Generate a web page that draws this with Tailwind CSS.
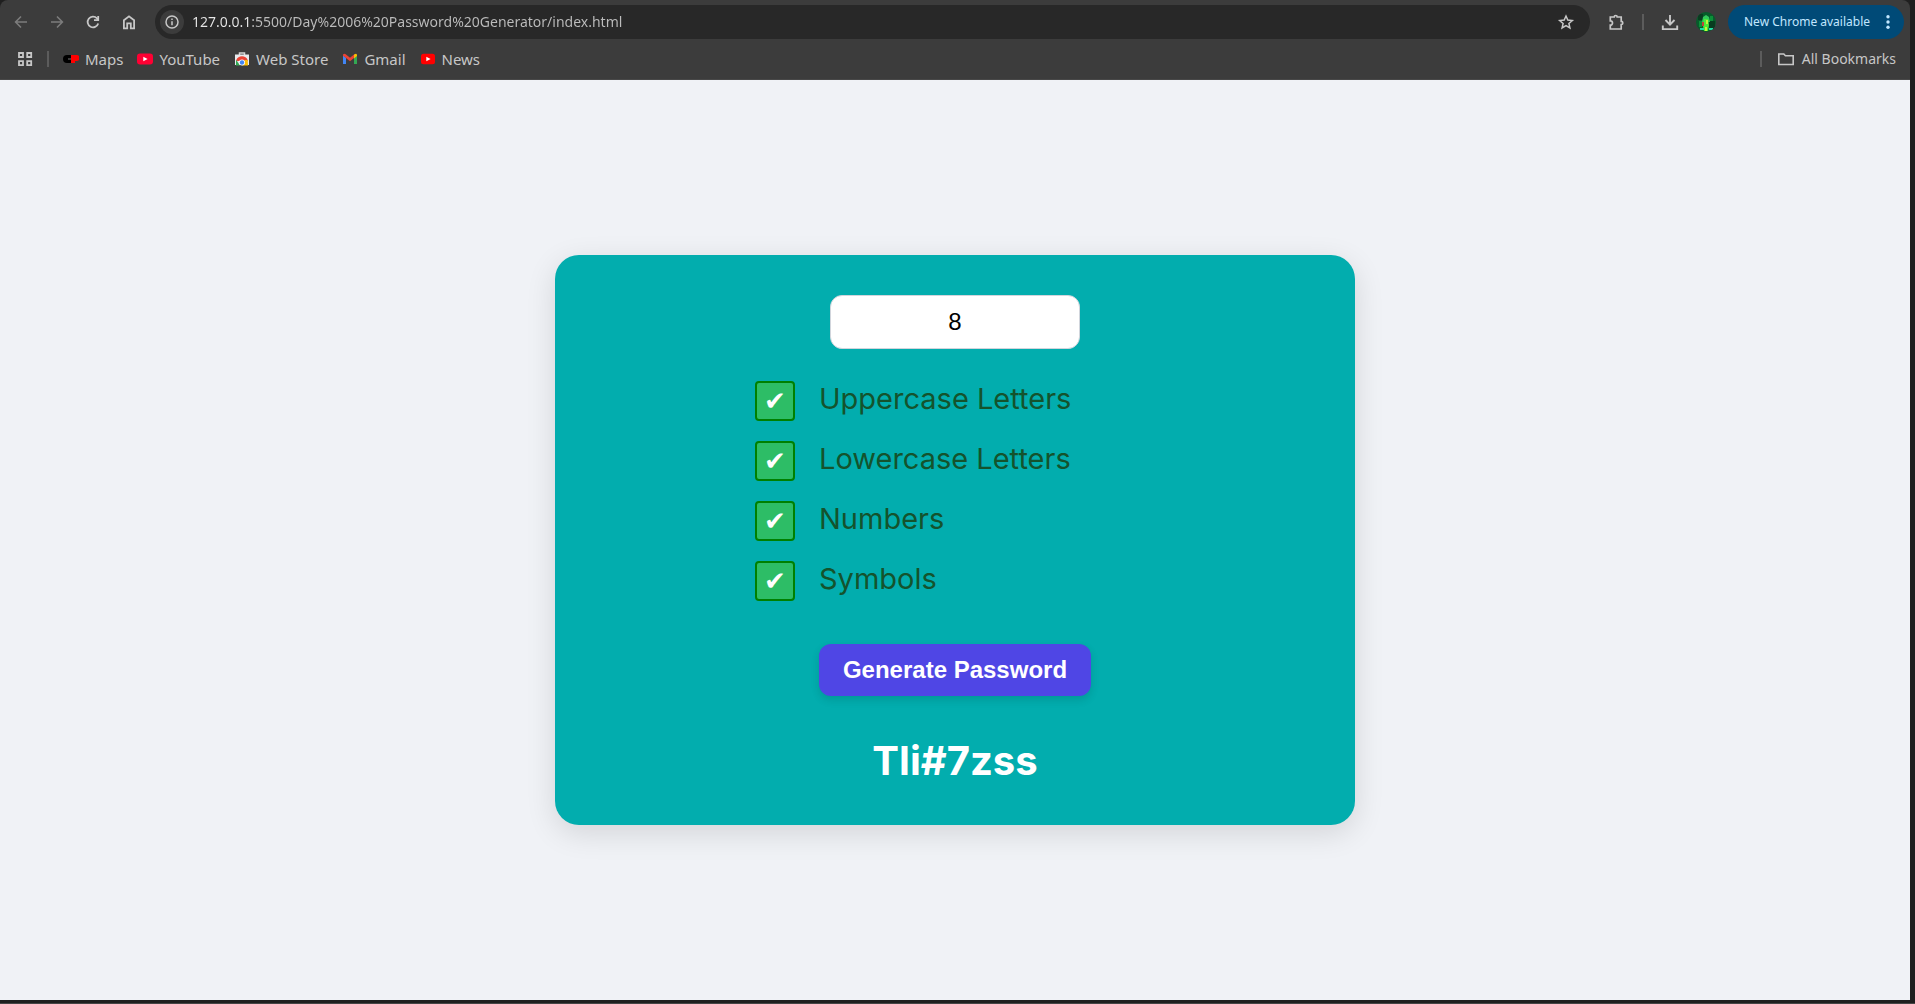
<!DOCTYPE html>
<html lang="en">
<head>
<meta charset="utf-8">
<title>Password Generator</title>
<script src="https://cdn.jsdelivr.net/npm/@tailwindcss/browser@4"></script>
</head>
<body class="bg-[#1f1f1f] font-['Noto_Sans',sans-serif]">
<div class="flex min-h-screen flex-col border-b border-[#454545] pr-[5px] pb-[3px]">
  <header class="h-20 rounded-t-lg border-b border-[#484848] bg-[#3c3c3c] text-[#c7c7c7]">
    <div class="flex h-11 items-center pr-1.5">
      <nav class="flex items-center gap-4 pl-[11px]">
        <button aria-label="Back" class="text-[#7c7c7c]"><svg class="size-5" viewBox="0 0 20 20" fill="none" stroke="currentColor" stroke-width="1.6"><path d="M16 10H5M10 4.500L4.600 10l5.400 5.500"/></svg></button>
        <button aria-label="Forward" class="text-[#7c7c7c]"><svg class="size-5" viewBox="0 0 20 20" fill="none" stroke="currentColor" stroke-width="1.600"><path d="M4 10h11M10 4.500l5.400 5.500-5.400 5.500"/></svg></button>
        <button aria-label="Reload"><svg class="size-5" viewBox="0 0 20 20" fill="none" stroke="currentColor" stroke-width="1.800"><path d="M15.200 11.500A5.400 5.400 0 1 1 14 6.300L15.300 8"/><path d="M15.200 4v4.200H11"/></svg></button>
        <button aria-label="Home"><svg class="size-5" viewBox="0 0 20 20" fill="none" stroke="currentColor" stroke-width="1.800"><path d="M4.900 8.300L10 4.300l5.100 4v8h-3.300v-5H8.200v5H4.900z"/></svg></button>
      </nav>
      <div class="ml-4 flex h-[34px] flex-1 items-center rounded-full bg-[#282828] pr-3.5 pl-[5px]">
        <button aria-label="Site information" class="flex size-6 items-center justify-center rounded-full bg-[#3c3c3c]"><svg class="size-4" viewBox="0 0 16 16" fill="none" stroke="currentColor" stroke-width="1.500"><circle cx="8" cy="8" r="6"/><path d="M8 7.200v4M8 4.500v1.500"/></svg></button>
        <input aria-label="Address" class="ml-2 min-w-0 flex-1 bg-[linear-gradient(90deg,#e8e8e8_60px,#bdbdbd_60px)] bg-clip-text text-sm text-transparent outline-none" value="127.0.0.1:5500/Day%2006%20Password%20Generator/index.html">
        <button aria-label="Bookmark this tab"><svg class="size-5" viewBox="0 0 20 20" fill="none" stroke="currentColor" stroke-width="1.500"><path d="M10 4l1.800 4.100 4.500.4-3.400 3 1 4.400L10 13.600l-3.900 2.300 1-4.400-3.400-3 4.500-.4z"/></svg></button>
      </div>
      <button aria-label="Extensions" class="ml-[18px]"><svg class="size-5" viewBox="0 0 20 20" fill="none" stroke="currentColor" stroke-width="1.700"><path d="M2.300 5h3.900a1.500 1.500 0 0 1 3 0h4v4.300a1.600 1.600 0 0 1 0 3.200V17H2.300v-3.800a2.200 2.200 0 0 0 0-4.400z"/></svg></button>
      <span class="mr-4 ml-3.5 h-4 w-0.5 bg-[#5c5c5c]"></span>
      <button aria-label="Downloads"><svg class="size-5" viewBox="0 0 20 20" fill="none" stroke="currentColor" stroke-width="1.900"><path d="M10 3v9.500M5.500 8l4.500 4.600L14.500 8M2.800 13.500v3.600h14.400v-3.600"/></svg></button>
      <button aria-label="Profile" class="ml-4"><svg class="size-5 rounded-full" viewBox="0 0 20 20"><path fill="#075c2b" d="M0 0h20v20H0z"/><path fill="#093c20" d="M2 2h5v6H2zM13 9h6v8h-6z"/><path fill="#0c8f38" d="M3 9h3v6H3zM14 4h3v5h-3z"/><path fill="#32c95b" d="M7 5l3-2 3 2 1 5H6z"/><path fill="#4aec37" d="M8 7h4l1 6-1 6H8l-1-5z"/><path fill="#c4f53c" d="M10 8h2v4h-2zM9 15h2v4H9z"/><path fill="#c1433a" d="M6 10h2v4H6z"/><path fill="#20dfa5" d="M4 16h4v2H4zM13 16h4v2h-4z"/></svg></button>
      <button class="ml-3 flex h-[34px] items-center gap-2.5 rounded-full bg-[#004a77] pr-2 pl-4 text-xs text-[#c2e7ff]">New Chrome available
        <svg class="size-4" viewBox="0 0 16 16" fill="currentColor"><circle cx="8" cy="2.800" r="1.700"/><circle cx="8" cy="8" r="1.700"/><circle cx="8" cy="13.200" r="1.700"/></svg></button>
    </div>
    <nav class="flex h-[30px] items-center pr-3.5 pl-[17px] text-[15px]">
      <button aria-label="Apps"><svg class="size-4" viewBox="0 0 16 16" fill="none" stroke="currentColor" stroke-width="1.800"><path d="M2 2h4v4H2zM10.200 2h4v4h-4zM2 10.200h4v4H2zM10.200 10.200h4v4h-4z"/></svg></button>
      <span class="mx-3.5 h-4 w-0.5 bg-[#5c5c5c]"></span>
      <a href="#" class="flex items-center gap-1.5"><svg class="size-4" viewBox="0 0 16 16"><rect y="4" width="11" height="8" rx="4"/><path fill="#f00" d="M8 4h5.500a2.500 2.500 0 0 1 0 6H12v2H8z"/><path fill="#3c3c3c" d="M5 7h3v2H5z"/></svg>Maps</a>
      <a href="#" class="ml-3.5 flex items-center gap-1.5"><svg class="size-4" viewBox="0 0 16 16"><rect y="2.500" width="16" height="11" rx="3" fill="#ff0033"/><path fill="#fff" d="M6.300 5.700l4.300 2.300-4.300 2.300z"/></svg>YouTube</a>
      <a href="#" class="ml-3.5 flex items-center gap-1.5"><svg class="size-4" viewBox="0 0 16 16"><path fill="none" stroke="#d5d5d5" stroke-width="1.500" d="M5.500 4V2h5v2"/><path fill="#e8eaed" d="M1 3.500h14V14H1z"/><path fill="#ea4335" d="M2.300 9a6.200 6.200 0 0 1 11.400 0v1H2.300z"/><path fill="#34a853" d="M2.300 9L6 14.500H2V9z"/><path fill="#fbbc04" d="M13.700 9l.3 5.500H8L11 9z"/><circle cx="8" cy="11.500" r="3" fill="#fff"/><circle cx="8" cy="11.500" r="2.200" fill="#4285f4"/></svg>Web Store</a>
      <a href="#" class="ml-3.5 flex items-center gap-1.5"><svg class="size-4" viewBox="0 0 16 16"><path fill="#4285f4" d="M1 4.500l3 2.300V13H1z"/><path fill="#34a853" d="M15 4.500l-3 2.300V13h3z"/><path fill="#ea4335" d="M1 3.500Q2.500 2 4 3.500l4 3.200 4-3.200v3.600l-4 3.200-4-3.200-3-2.400z"/><path fill="#fbbc04" d="M12 3.500q3-2 3 .8v.8l-3 2.300z"/></svg>Gmail</a>
      <a href="#" class="ml-3.5 flex items-center gap-1.5"><svg class="size-4" viewBox="0 0 16 16"><rect x="1" y="2.700" width="14" height="10.600" rx="2.500" fill="#f00"/><path fill="#fff" d="M6.300 5.700l4.300 2.300-4.300 2.300z"/></svg>News</a>
      <span class="mr-4 ml-auto h-4 w-0.5 bg-[#5c5c5c]"></span>
      <a href="#" class="flex items-center gap-2 text-sm"><svg class="size-4" viewBox="0 0 16 16" fill="none" stroke="currentColor" stroke-width="1.600"><path d="M.8 3h5l1.600 1.700h7.800v8.800H.8z"/></svg>All Bookmarks</a>
    </nav>
  </header>
  <main class="flex flex-1 items-center justify-center bg-[#f0f2f6] font-['Inter',sans-serif]">
    <section class="flex w-full max-w-[800px] flex-col items-center rounded-3xl bg-[#02adae] p-10 shadow-[0_8px_30px_rgba(0,0,0,0.12)]">
      <input aria-label="Password length" class="h-[54px] w-[250px] rounded-xl border border-gray-300 bg-white text-center font-['Liberation_Sans',sans-serif] text-2xl text-black" value="8">
      <div class="mt-8 grid w-full max-w-[400px] gap-5">
        <label class="flex h-10 gap-6 text-[29px] leading-9 text-[#14532d]"><span class="grid size-10 shrink-0"><input type="checkbox" checked class="col-start-1 row-start-1 size-10 appearance-none rounded border-2 border-[#008000] bg-[#2dbd66]"><span class="col-start-1 row-start-1 text-center font-['DejaVu_Sans',sans-serif] text-[26px] leading-10 text-white">✔</span></span>Uppercase Letters</label>
        <label class="flex h-10 gap-6 text-[29px] leading-9 text-[#14532d]"><span class="grid size-10 shrink-0"><input type="checkbox" checked class="col-start-1 row-start-1 size-10 appearance-none rounded border-2 border-[#008000] bg-[#2dbd66]"><span class="col-start-1 row-start-1 text-center font-['DejaVu_Sans',sans-serif] text-[26px] leading-10 text-white">✔</span></span>Lowercase Letters</label>
        <label class="flex h-10 gap-6 text-[29px] leading-9 text-[#14532d]"><span class="grid size-10 shrink-0"><input type="checkbox" checked class="col-start-1 row-start-1 size-10 appearance-none rounded border-2 border-[#008000] bg-[#2dbd66]"><span class="col-start-1 row-start-1 text-center font-['DejaVu_Sans',sans-serif] text-[26px] leading-10 text-white">✔</span></span>Numbers</label>
        <label class="flex h-10 gap-6 text-[29px] leading-9 text-[#14532d]"><span class="grid size-10 shrink-0"><input type="checkbox" checked class="col-start-1 row-start-1 size-10 appearance-none rounded border-2 border-[#008000] bg-[#2dbd66]"><span class="col-start-1 row-start-1 text-center font-['DejaVu_Sans',sans-serif] text-[26px] leading-10 text-white">✔</span></span>Symbols</label>
      </div>
      <button class="mt-[43px] h-[52px] rounded-xl bg-[#4f46e5] px-6 font-['Liberation_Sans',sans-serif] text-2xl font-bold text-white shadow-[0_4px_8px_rgba(0,0,0,0.12)]">Generate Password</button>
      <output class="mt-[41px] text-[40px] leading-[48px] font-bold text-white">Tli#7zss</output>
    </section>
  </main>
</div>
</body>
</html>
